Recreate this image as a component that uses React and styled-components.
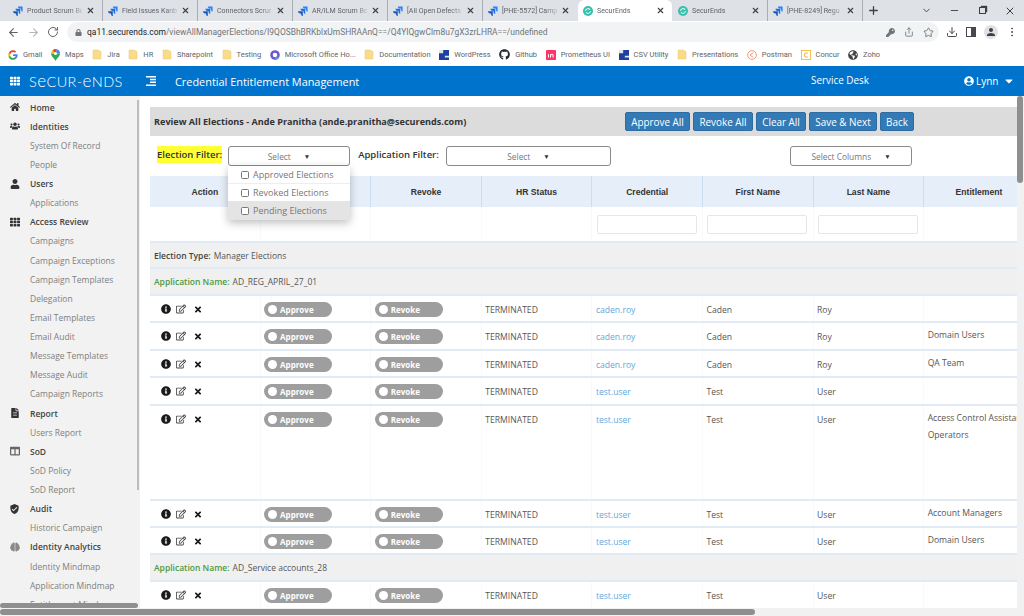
import React from 'react';
import styled, { createGlobalStyle } from 'styled-components';
import { ArrowLeft, ArrowRight, RotateCw, Share, Star, Download, EllipsisVertical, X, Plus, ChevronDown, Minus } from 'lucide-react';
import { FaLock, FaKey, FaUserCircle, FaCaretDown, FaInfoCircle, FaRegEdit, FaTimes, FaHome, FaUsers, FaUser, FaTh, FaFileAlt, FaGithub, FaGlobeAmericas, FaBrain, FaColumns } from 'react-icons/fa';
import { MdVerifiedUser, MdPerson } from 'react-icons/md';

const GlobalStyle = createGlobalStyle`
  html, body { margin: 0; padding: 0; height: 100%; overflow: hidden; background: #fff; }
  * { box-sizing: border-box; }
  body { font-family: 'Open Sans', 'Liberation Sans', sans-serif; }
`;

const Shell = styled.div`
  width: 1024px;
  height: 616px;
  display: flex;
  flex-direction: column;
  overflow: hidden;
`;

/* ---- browser chrome ---- */
const TabStrip = styled.div`
  height: 21px;
  background: #dee1e6;
  display: flex;
  align-items: center;
  padding-left: 8px;
  flex-shrink: 0;
`;

const Tab = styled.div`
  width: 95px;
  height: 21px;
  display: flex;
  align-items: center;
  padding: 0 5px;
  gap: 4px;
  border-right: ${p => (p.$sep ? '1px solid #a9adb3' : '1px solid transparent')};
  background-clip: padding-box;
  background-color: ${p => (p.$active ? '#fff' : 'transparent')};
  border-radius: ${p => (p.$active ? '6px 6px 0 0' : '0')};
  color: #5f6368;
  font-family: 'Roboto', sans-serif;
  font-size: 7.05px;

  svg { flex-shrink: 0; }
`;

const TabTitle = styled.span`
  flex: 1;
  min-width: 0;
  white-space: nowrap;
  -webkit-mask-image: linear-gradient(90deg, #000 78%, rgba(0, 0, 0, 0.25) 100%);
  mask-image: linear-gradient(90deg, #000 78%, rgba(0, 0, 0, 0.25) 100%);
`;

const TabClose = styled(X)`
  width: 9px;
  height: 9px;
  color: #3c4043;
  stroke-width: 3;
  margin-right: 2px;
`;

const NewTab = styled(Plus)`
  width: 13px;
  height: 13px;
  color: #3c4043;
  stroke-width: 2.4;
  margin-left: 3.5px;
`;

const WindowControls = styled.div`
  margin-left: auto;
  display: flex;
  align-items: center;
  color: #3c4043;
`;

const WindowButton = styled.span`
  width: 28px;
  display: flex;
  justify-content: center;
`;

const RestoreIcon = styled.span`
  width: 7px;
  height: 7px;
  border: 1px solid #3c4043;
  box-shadow: 1.5px -1.5px 0 -0.3px #3c4043;
`;

const AddressRow = styled.div`
  height: 22px;
  background: #fff;
  display: flex;
  align-items: center;
  padding-left: 7px;
  gap: 7px;
  flex-shrink: 0;
  color: #5f6368;
`;

const UrlPill = styled.div`
  width: 872px;
  height: 20px;
  margin-left: 1px;
  background: #f1f3f4;
  border-radius: 10px;
  display: flex;
  align-items: center;
  padding: 0 5px 0 8px;
  font-family: 'Roboto', sans-serif;
  font-size: 8.45px;
  color: #70757a;
  gap: 5px;
  white-space: nowrap;
`;

const UrlHost = styled.span`
  color: #202124;
`;

const PillIcons = styled.div`
  margin-left: auto;
  display: flex;
  align-items: center;
  gap: 9px;
`;

const ToolIcons = styled.div`
  display: flex;
  align-items: center;
  gap: 8px;
  color: #45494e;
`;

const PanelIcon = styled.span`
  width: 10px;
  height: 10px;
  border: 1.5px solid #45494e;
  background: linear-gradient(90deg, transparent 50%, #45494e 50%);
`;

const Avatar = styled.span`
  width: 14px;
  height: 14px;
  border-radius: 50%;
  background: #dee1e6;
  display: flex;
  align-items: center;
  justify-content: center;
  color: #3c4043;
`;

const BookmarkBar = styled.div`
  height: 23px;
  background: #fff;
  display: flex;
  align-items: center;
  padding-left: 8px;
  gap: 8.6px;
  flex-shrink: 0;
`;

const Bookmark = styled.div`
  display: flex;
  align-items: center;
  gap: 5px;
  font-family: 'Roboto', sans-serif;
  font-size: 7.5px;
  color: #5f6368;
  white-space: nowrap;
`;

/* ---- app header ---- */
const TopBar = styled.header`
  height: 30px;
  background: #0074cc;
  color: #fff;
  display: flex;
  align-items: center;
  flex-shrink: 0;
  padding-left: 10px;
`;

const Logo = styled.span`
  font-family: 'Lato', sans-serif;
  font-weight: 300;
  font-size: 14.5px;
  letter-spacing: 0.4px;
  margin-left: 9px;
  width: 117px;
  white-space: nowrap;
`;

const LogoE = styled.span`
  font-size: 17px;
  line-height: 10px;
`;

const TopTitle = styled.div`
  font-size: 10.9px;
  margin-left: 19px;
  width: 636px;
`;

const ServiceDesk = styled.div`
  font-size: 9.9px;
  width: 153px;
  margin-top: -3px;
`;

const UserMenu = styled.div`
  display: flex;
  align-items: center;
  gap: 2px;
  font-size: 10px;
`;

/* ---- page ---- */
const Page = styled.div`
  flex: 1;
  min-height: 0;
  display: flex;
  position: relative;
`;

const Sidebar = styled.nav`
  width: 140px;
  flex-shrink: 0;
  background: #f2f2f2;
  padding-top: 1.5px;
  overflow: hidden;
  position: relative;
`;

const SideItem = styled.div`
  height: 19.13px;
  display: flex;
  align-items: center;
  padding-left: 30px;
  font-size: 8.5px;
  white-space: nowrap;
  color: ${p => (p.$head ? '#444' : '#808080')};
  font-weight: ${p => (p.$head ? 600 : 400)};
  position: relative;
`;

const SideIcon = styled.span`
  position: absolute;
  left: 9px;
  width: 11px;
  display: flex;
  justify-content: center;
  font-size: 10px;
  color: ${p => p.$color || '#333'};
`;

const SideScroll = styled.div`
  position: absolute;
  left: 136.5px;
  top: 4px;
  width: 2.5px;
  height: 390px;
  background: #bdbdbd;
`;

const Main = styled.main`
  flex: 1;
  min-width: 0;
  padding: 11px 0 0 10px;
  overflow: hidden;
  color: #555;
`;

const TitleBand = styled.div`
  height: 29px;
  background: #dcdcdc;
  display: flex;
  align-items: center;
  padding-left: 4px;
  font-size: 9.1px;
  font-weight: 700;
  color: #333;
`;

const BandActions = styled.div`
  margin-left: auto;
  margin-right: 103px;
  display: flex;
  gap: 3px;
`;

const ActionButton = styled.button`
  width: ${p => p.$w}px;
  height: 19px;
  padding: 0;
  background: #337ab7;
  border: 1px solid #2e6da4;
  border-radius: 2px;
  color: #fff;
  font-family: 'Open Sans', sans-serif;
  font-size: 9.9px;
  white-space: nowrap;
`;

const FilterBar = styled.div`
  height: 40px;
  display: flex;
  align-items: flex-start;
  padding: 10px 0 0 7px;
`;

const FilterLabel = styled.label`
  width: ${p => p.$w}px;
  flex-shrink: 0;
  margin: 0 6px 0 ${p => p.$left || 0}px;
  font-size: 9.5px;
  font-weight: 600;
  color: #333;
  line-height: 17px;
  text-align: center;
  white-space: nowrap;
  background: ${p => (p.$mark ? '#ffff33' : 'transparent')};
`;

const SelectBox = styled.div`
  position: relative;
  flex-shrink: 0;
  width: ${p => p.$w}px;
  height: 20px;
  margin-left: ${p => p.$left || 0}px;
  border: 1px solid #8a8a8a;
  border-radius: 3px;
  background: #fff;
  display: flex;
  align-items: center;
  justify-content: center;
  gap: ${p => p.$gap || 13}px;
  font-size: 8.4px;
  color: #777;
`;

const Caret = styled.span`
  font-size: 6.5px;
  color: #333;
`;

const Menu = styled.div`
  position: absolute;
  top: 19px;
  left: -1px;
  width: 122px;
  background: #fff;
  box-shadow: 0 3px 8px rgba(0, 0, 0, 0.25);
  border-radius: 0 0 3px 3px;
  z-index: 5;
`;

const MenuItem = styled.div`
  height: ${p => p.$h}px;
  display: flex;
  align-items: center;
  gap: 4px;
  padding-left: 13px;
  font-size: 9px;
  color: #777;
  background: ${p => (p.$hover ? '#e4e4e4' : '#fff')};
  border-bottom: ${p => (p.$line ? '1px solid #eee' : 'none')};
`;

const MenuCheck = styled.span`
  width: 8px;
  height: 8px;
  border: 1px solid #777;
  border-radius: 1.5px;
  background: #fff;
`;

const GridRow = styled.div`
  display: grid;
  grid-template-columns: repeat(8, 110.6px);
  height: ${p => p.$h}px;
`;

const HeadCell = styled.div`
  background: #e6eefa;
  border-right: 1px solid #c8def5;
  display: flex;
  align-items: center;
  justify-content: center;
  font-family: 'Liberation Sans', sans-serif;
  font-size: 8.6px;
  font-weight: 700;
  color: #333;
`;

const SearchRow = styled(GridRow)`
  border-bottom: 2px solid #e1ebf6;
`;

const SearchCell = styled.div`
  padding: 8px 5px 0 4.5px;
  border-right: 1px solid #f8f9fb;
`;

const SearchInput = styled.input`
  display: block;
  width: 100px;
  height: 19px;
  border: 1px solid #e6e6e6;
  border-radius: 2px;
  background: #fff;
`;

const Section = styled.div`
  height: ${p => p.$h}px;
  background: #f0f0f0;
  border-bottom: 2px solid #e1ebf6;
  display: flex;
  align-items: center;
  padding-left: 4px;
  gap: 3px;
  font-size: 8.5px;
  color: #555;
`;

const SectionKey = styled.b`
  font-weight: 600;
  color: ${p => p.$color || '#444'};
`;

const DataRow = styled(GridRow)`
  border-bottom: 2px solid #e1ebf6;
`;

const Cell = styled.div`
  padding: ${p => p.$top || 8}px 0 0 3.5px;
  font-size: 8.6px;
  line-height: 12px;
  white-space: nowrap;
  overflow: hidden;
  color: ${p => p.$color || '#555'};
  border-right: 1px solid #f8f9fb;
`;

const EntitlementLine = styled.div`
  height: 17px;
`;

const ActionIcons = styled.div`
  display: flex;
  align-items: flex-start;
  padding: 8px 0 0 11px;
  gap: 5px;
  color: #1a1a1a;
  font-size: 10px;
  border-right: 1px solid #f8f9fb;
`;

const CloseMark = styled(FaTimes)`
  width: 8px;
  height: 9px;
  margin: 1px 0 0 3px;
`;

const ToggleCell = styled.div`
  padding: 6px 0 0 3.5px;
  border-right: 1px solid #f8f9fb;
`;

const Toggle = styled.div`
  width: 68px;
  height: 15px;
  border-radius: 8px;
  background: #9e9e9e;
  display: flex;
  align-items: center;
  padding-left: 4px;
  gap: 3px;
  color: #fff;
  font-size: 8px;
  font-weight: 700;
`;

const Knob = styled.span`
  width: 9px;
  height: 9px;
  border-radius: 50%;
  background: #fff;
`;

const VScroll = styled.div`
  width: 7px;
  flex-shrink: 0;
  background: #f1f1f1;
`;

const VThumb = styled.div`
  width: 6px;
  height: 87px;
  background: #8f8f8f;
  border-radius: 3px;
`;

const HScroll = styled.div`
  position: absolute;
  left: 0;
  bottom: 0;
  width: 100%;
  height: 8px;
  background: #f1f1f1;
  z-index: 6;
`;

const HThumb = styled.div`
  width: 755px;
  height: 6px;
  margin-top: 1px;
  background: #8f8f8f;
  border-radius: 3px;
`;

const SideHThumb = styled.div`
  position: absolute;
  left: 0;
  bottom: 8px;
  width: 138px;
  height: 5.5px;
  background: #8f8f8f;
  border-radius: 3px;
  z-index: 6;
`;

const JiraIcon = () => (
  <svg width="10" height="10" viewBox="0 0 24 24">
    <path fill="#2684ff" d="M23 1H11.5c0 2.9 2.3 5.2 5.2 5.2h2.1v2c0 2.9 2.3 5.2 4.2 5.2z" />
    <path fill="#1f6fe0" d="M17.3 6.8H5.8c0 2.9 2.3 5.2 5.2 5.2h2.1v2c0 2.9 2.3 5.2 4.2 5.2z" />
    <path fill="#1858c4" d="M11.5 12.5H0c0 2.9 2.3 5.2 5.2 5.2h2.1v2c0 2.9 2.3 4.3 4.2 4.3z" />
  </svg>
);

const SecurEndsIcon = () => (
  <svg width="10" height="10" viewBox="0 0 24 24">
    <circle cx="12" cy="12" r="12" fill="#38bfae" />
    <path fill="none" stroke="#d5f3ef" strokeWidth="2.5" d="M6 12a6 6 0 0 1 11-3M18 12a6 6 0 0 1-11 3" />
  </svg>
);

const FolderIcon = () => (
  <svg width="10" height="11" viewBox="0 0 20 22">
    <path fill="#f8dc8c" stroke="#e9c86c" strokeWidth="1" d="M2 2h10l6 3v15H2z" />
  </svg>
);

const GoogleIcon = () => (
  <svg width="10" height="10" viewBox="0 0 24 24">
    <path fill="#4285f4" d="M23 12.3c0-.8-.1-1.6-.2-2.3H12v4.400h6.200c-.3 1.400-1.100 2.600-2.300 3.400v2.800h3.700c2.200-2 3.400-5 3.400-8.300z" />
    <path fill="#34a853" d="M12 23.500c3.100 0 5.700-1 7.600-2.900l-3.700-2.800c-1 .7-2.300 1.100-3.900 1.100-3 0-5.500-2-6.400-4.700H1.800v2.900c1.900 3.800 5.800 6.400 10.200 6.400z" />
    <path fill="#fbbc05" d="M5.600 14.200a6.900 6.900 0 0 1 0-4.400V6.900H1.800a11.500 11.500 0 0 0 0 10.200z" />
    <path fill="#ea4335" d="M12 5c1.700 0 3.200.6 4.400 1.700l3.300-3.300A11.500 11.500 0 0 0 1.800 6.900l3.800 2.900C6.500 7 9 5 12 5z" />
  </svg>
);

const MapsIcon = () => (
  <svg width="9" height="12" viewBox="0 0 18 24">
    <path fill="#34a853" d="M9 24C7 19 0 15 0 9h18c0 6-7 10-9 15z" />
    <path fill="#fbbc05" d="M0 9a9 9 0 0 1 3-6.700L9 9z" />
    <path fill="#ea4335" d="M3 2.300A9 9 0 0 1 12 .5L9 9z" />
    <path fill="#4285f4" d="M12 .5A9 9 0 0 1 18 9H9z" />
    <circle cx="9" cy="9" r="3" fill="#fff" />
  </svg>
);

const OfficeIcon = () => (
  <svg width="10" height="10" viewBox="0 0 24 24">
    <circle cx="12" cy="12" r="8.500" fill="none" stroke="#6a5acd" strokeWidth="6" />
    <path fill="none" stroke="#38a3e0" strokeWidth="6" d="M12 20.500a8.500 8.500 0 0 0 7-4" />
  </svg>
);

const WpIcon = () => (
  <svg width="10" height="10" viewBox="0 0 24 24">
    <rect width="24" height="24" fill="#1f3f9e" />
    <path fill="#fff" d="M0 0h10v8H0zM14 14h10v4H14z" opacity="0.85" />
  </svg>
);

const InVisionIcon = () => (
  <svg width="10" height="10" viewBox="0 0 24 24">
    <rect width="24" height="24" rx="2" fill="#ff3366" />
    <path fill="none" stroke="#fff" strokeWidth="2.500" d="M6 10v8M11 18v-8M11 13c2-4 6-3 6 0v5" />
  </svg>
);

const PostmanIcon = () => (
  <svg width="10" height="10" viewBox="0 0 24 24">
    <circle cx="12" cy="12" r="10.500" fill="#fff" stroke="#f08a5d" strokeWidth="2" />
    <path fill="none" stroke="#f08a5d" strokeWidth="2" d="M7 12l8-6M7 12l8 6" />
  </svg>
);

const ConcurIcon = () => (
  <svg width="10" height="10" viewBox="0 0 24 24">
    <rect x="1" y="1" width="22" height="22" fill="#fff" stroke="#f2b632" strokeWidth="2" />
    <path fill="none" stroke="#f2b632" strokeWidth="2.500" d="M16 8a5 5 0 1 0 0 8" />
  </svg>
);

const tabs = [
  { title: 'Product Scrum Bc', sep: true },
  { title: 'Field Issues Kanb', sep: true },
  { title: 'Connectors Scrur', sep: true },
  { title: 'AR/ILM Scrum Bc', sep: true },
  { title: '[All Open Defects', sep: true },
  { title: '[PHE-5572] Camp' },
  { title: 'SecurEnds', se: true, active: true },
  { title: 'SecurEnds', se: true, sep: true },
  { title: '[PHE-8249] Regu', sep: true },
];

const bookmarks = [
  ['Gmail', <GoogleIcon />],
  ['Maps', <MapsIcon />],
  ['Jira', <FolderIcon />],
  ['HR', <FolderIcon />],
  ['Sharepoint', <FolderIcon />],
  ['Testing', <FolderIcon />],
  ['Microsoft Office Ho...', <OfficeIcon />],
  ['Documentation', <FolderIcon />],
  ['WordPress', <WpIcon />],
  ['Github', <FaGithub size={11} color="#24292e" />],
  ['Prometheus UI', <InVisionIcon />],
  ['CSV Utility', <WpIcon />],
  ['Presentations', <FolderIcon />],
  ['Postman', <PostmanIcon />],
  ['Concur', <ConcurIcon />],
  ['Zoho', <FaGlobeAmericas size={10} color="#444" />],
];

const sideItems = [
  { label: 'Home', icon: <FaHome /> },
  { label: 'Identities', icon: <FaUsers /> },
  { label: 'System Of Record' },
  { label: 'People' },
  { label: 'Users', icon: <FaUser /> },
  { label: 'Applications' },
  { label: 'Access Review', icon: <FaTh /> },
  { label: 'Campaigns' },
  { label: 'Campaign Exceptions' },
  { label: 'Campaign Templates' },
  { label: 'Delegation' },
  { label: 'Email Templates' },
  { label: 'Email Audit' },
  { label: 'Message Templates' },
  { label: 'Message Audit' },
  { label: 'Campaign Reports' },
  { label: 'Report', icon: <FaFileAlt /> },
  { label: 'Users Report' },
  { label: 'SoD', icon: <FaColumns />, color: '#666' },
  { label: 'SoD Policy' },
  { label: 'SoD Report' },
  { label: 'Audit', icon: <MdVerifiedUser size={12} /> },
  { label: 'Historic Campaign' },
  { label: 'Identity Analytics', icon: <FaBrain />, color: '#888' },
  { label: 'Identity Mindmap' },
  { label: 'Application Mindmap' },
  { label: 'Entitlement Mindmap' },
];

const columns = ['Action', '', 'Revoke', 'HR Status', 'Credential', 'First Name', 'Last Name', 'Entitlement'];

const Row = ({ cred, first, last, lines = [], h = 27.4 }) => (
  <DataRow $h={h}>
    <ActionIcons>
      <FaInfoCircle />
      <FaRegEdit color="#444" />
      <CloseMark />
    </ActionIcons>
    <ToggleCell>
      <Toggle><Knob />Approve</Toggle>
    </ToggleCell>
    <ToggleCell>
      <Toggle><Knob />Revoke</Toggle>
    </ToggleCell>
    <Cell>TERMINATED</Cell>
    <Cell $color="#5fa8dd">{cred}</Cell>
    <Cell>{first}</Cell>
    <Cell>{last}</Cell>
    <Cell $top={6}>
      {lines.map(line => <EntitlementLine key={line}>{line}</EntitlementLine>)}
    </Cell>
  </DataRow>
);

export default function App() {
  return (
    <Shell>
      <GlobalStyle />
      <TabStrip>
        {tabs.map((tab, i) => (
          <Tab key={i} $active={tab.active} $sep={tab.sep}>
            {tab.se ? <SecurEndsIcon /> : <JiraIcon />}
            <TabTitle>{tab.title}</TabTitle>
            <TabClose />
          </Tab>
        ))}
        <NewTab />
        <WindowControls>
          <WindowButton><ChevronDown size={11} /></WindowButton>
          <WindowButton><Minus size={11} /></WindowButton>
          <WindowButton><RestoreIcon /></WindowButton>
          <WindowButton><X size={12} /></WindowButton>
        </WindowControls>
      </TabStrip>

      <AddressRow>
        <ArrowLeft size={13} />
        <ArrowRight size={13} color="#b4b7bb" />
        <RotateCw size={12} />
        <UrlPill>
          <FaLock size={7} />
          <span>
            <UrlHost>qa11.securends.com</UrlHost>/viewAllManagerElections/I9QOSBhBRKblxUmSHRAAnQ==/Q4YIQgwClm8u7gX3zrLHRA==/undefined
          </span>
          <PillIcons>
            <FaKey size={9} />
            <Share size={10} />
            <Star size={11} />
          </PillIcons>
        </UrlPill>
        <ToolIcons>
          <Download size={12} />
          <PanelIcon />
          <Avatar><MdPerson size={12} /></Avatar>
          <EllipsisVertical size={12} />
        </ToolIcons>
      </AddressRow>

      <BookmarkBar>
        {bookmarks.map(([name, icon]) => (
          <Bookmark key={name}>{icon}{name}</Bookmark>
        ))}
      </BookmarkBar>

      <TopBar>
        <FaTh size={10} />
        <Logo>S<LogoE>e</LogoE>CUR-<LogoE>e</LogoE>NDS</Logo>
        <svg width="10" height="10" viewBox="0 0 10 10" fill="#fff">
          <path d="M0 0h10v1.500H0zM4 2.800h6v1.500H4zM4 5.600h6v1.500H4zM0 8.400h10V10H0z" />
        </svg>
        <TopTitle>Credential Entitlement Management</TopTitle>
        <ServiceDesk>Service Desk</ServiceDesk>
        <UserMenu>
          <FaUserCircle size={10} />
          Lynn
          <FaCaretDown size={12} style={{ marginLeft: 2 }} />
        </UserMenu>
      </TopBar>

      <Page>
        <Sidebar>
          {sideItems.map(item => (
            <SideItem key={item.label} $head={!!item.icon}>
              {item.icon && <SideIcon $color={item.color}>{item.icon}</SideIcon>}
              {item.label}
            </SideItem>
          ))}
          <SideScroll />
        </Sidebar>

        <Main>
          <TitleBand>
            Review All Elections - Ande Pranitha (ande.pranitha@securends.com)
            <BandActions>
              <ActionButton $w={65}>Approve All</ActionButton>
              <ActionButton $w={60}>Revoke All</ActionButton>
              <ActionButton $w={50}>Clear All</ActionButton>
              <ActionButton $w={68}>Save &amp; Next</ActionButton>
              <ActionButton $w={34}>Back</ActionButton>
            </BandActions>
          </TitleBand>

          <FilterBar>
            <FilterLabel $mark $w={65}>Election Filter:</FilterLabel>
            <SelectBox $w={122}>
              Select <Caret>▼</Caret>
              <Menu>
                <MenuItem $h={18} $line><MenuCheck />Approved Elections</MenuItem>
                <MenuItem $h={17}><MenuCheck />Revoked Elections</MenuItem>
                <MenuItem $h={19} $hover><MenuCheck />Pending Elections</MenuItem>
              </Menu>
            </SelectBox>
            <FilterLabel $left={7} $w={83}>Application Filter:</FilterLabel>
            <SelectBox $w={165}>
              Select <Caret>▼</Caret>
            </SelectBox>
            <SelectBox $w={122} $left={179}>
              Select Columns <Caret>▼</Caret>
            </SelectBox>
          </FilterBar>

          <GridRow $h={31}>
            {columns.map((col, i) => <HeadCell key={i}>{col}</HeadCell>)}
          </GridRow>

          <SearchRow $h={36}>
            <SearchCell />
            <SearchCell />
            <SearchCell />
            <SearchCell />
            <SearchCell><SearchInput /></SearchCell>
            <SearchCell><SearchInput /></SearchCell>
            <SearchCell><SearchInput /></SearchCell>
            <SearchCell />
          </SearchRow>

          <Section $h={26}><SectionKey>Election Type:</SectionKey> Manager Elections</Section>
          <Section $h={27}><SectionKey $color="#4c9a3f">Application Name:</SectionKey> AD_REG_APRIL_27_01</Section>

          <Row cred="caden.roy" first="Caden" last="Roy" />
          <Row cred="caden.roy" first="Caden" last="Roy" lines={['Domain Users']} />
          <Row cred="caden.roy" first="Caden" last="Roy" lines={['QA Team']} />
          <Row cred="test.user" first="Test" last="User" />
          <Row cred="test.user" first="Test" last="User" h={95} lines={['Access Control Assistance', 'Operators']} />
          <Row cred="test.user" first="Test" last="User" lines={['Account Managers']} />
          <Row cred="test.user" first="Test" last="User" lines={['Domain Users']} />

          <Section $h={27}><SectionKey $color="#4c9a3f">Application Name:</SectionKey> AD_Service accounts_28</Section>

          <Row cred="test.user" first="Test" last="User" />
        </Main>

        <VScroll><VThumb /></VScroll>
        <SideHThumb />
        <HScroll><HThumb /></HScroll>
      </Page>
    </Shell>
  );
}
